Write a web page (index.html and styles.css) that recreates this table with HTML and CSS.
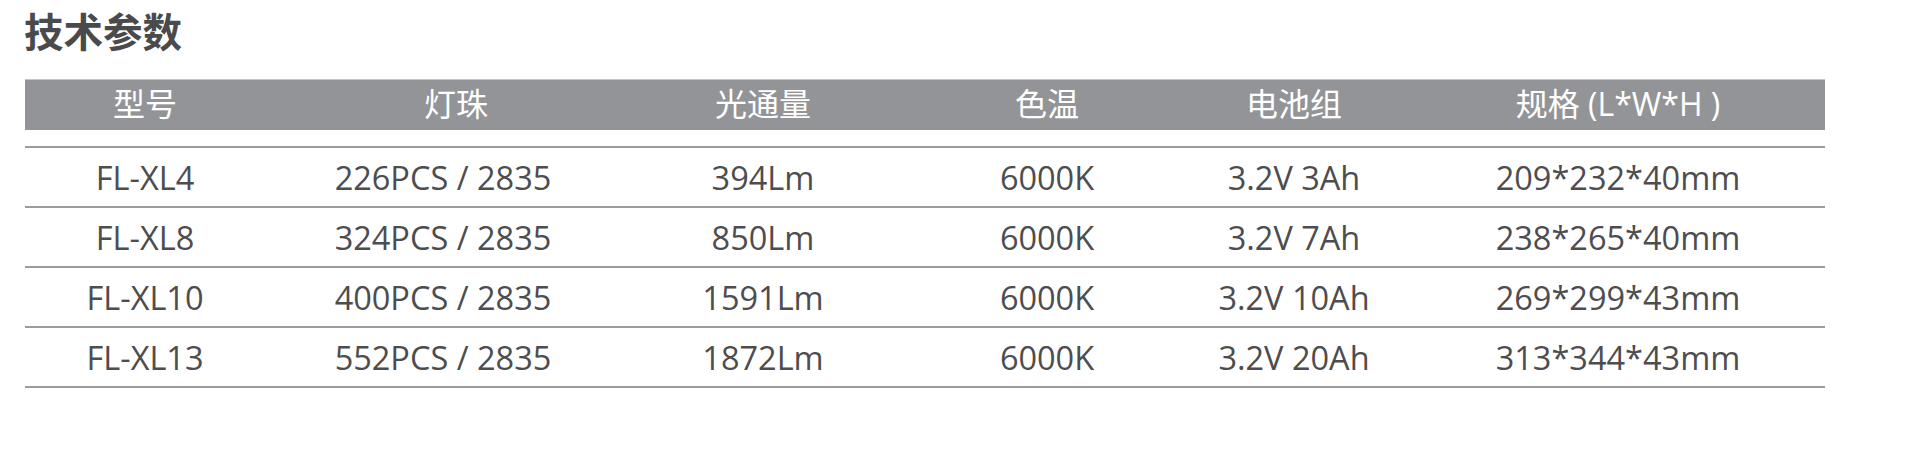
FILE: index.html
```html
<!DOCTYPE html>
<html lang="zh">
<head>
<meta charset="utf-8">
<title>技术参数</title>
<link rel="stylesheet" href="styles.css">
</head>
<body>
<div class="page">
  <h1 class="title">技术参数</h1>
  <div class="table">
    <div class="thead">
      <div class="th">型号</div>
      <div class="th th-led">灯珠</div>
      <div class="th">光通量</div>
      <div class="th">色温</div>
      <div class="th">电池组</div>
      <div class="th th-last">规格 (L*W*H )</div>
    </div>
    <div class="tbody">
      <div class="tr">
        <div class="td">FL-XL4</div>
        <div class="td">226PCS / 2835</div>
        <div class="td">394Lm</div>
        <div class="td">6000K</div>
        <div class="td">3.2V 3Ah</div>
        <div class="td td-last">209*232*40mm</div>
      </div>
      <div class="tr">
        <div class="td">FL-XL8</div>
        <div class="td">324PCS / 2835</div>
        <div class="td">850Lm</div>
        <div class="td">6000K</div>
        <div class="td">3.2V 7Ah</div>
        <div class="td td-last">238*265*40mm</div>
      </div>
      <div class="tr">
        <div class="td">FL-XL10</div>
        <div class="td">400PCS / 2835</div>
        <div class="td">1591Lm</div>
        <div class="td">6000K</div>
        <div class="td">3.2V 10Ah</div>
        <div class="td td-last">269*299*43mm</div>
      </div>
      <div class="tr">
        <div class="td">FL-XL13</div>
        <div class="td">552PCS / 2835</div>
        <div class="td">1872Lm</div>
        <div class="td">6000K</div>
        <div class="td">3.2V 20Ah</div>
        <div class="td td-last">313*344*43mm</div>
      </div>
    </div>
  </div>
</div>
</body>
</html>
```

FILE: styles.css
```css
html, body {
  margin: 0;
  padding: 0;
  background: #ffffff;
}

.page {
  width: 1800px;
  padding: 8px 0 0 25px;
  font-family: "Open Sans", "Noto Sans CJK SC", sans-serif;
}

.title {
  margin: 0 0 0 -1px;
  font-family: "Noto Sans CJK SC", sans-serif;
  font-size: 39.5px;
  line-height: 44px;
  font-weight: 700;
  color: #4a4a4c;
}

.table {
  margin-top: 27px;
}

.thead,
.tr {
  display: grid;
  grid-template-columns: 240px 356px 284px 284px 210px 426px;
}

.thead {
  height: 51px;
  background: #939497;
  border-top: 1px solid #c4c5c7;
  box-sizing: border-box;
  align-items: center;
}

.th {
  text-align: center;
  color: #ffffff;
  font-family: "Open Sans", "Noto Sans CJK SC", sans-serif;
  font-size: 32px;
  line-height: 1;
  padding-bottom: 2px;
}

.th-led {
  padding-left: 26px;
}

.tbody {
  margin-top: 16px;
  border-bottom: 2px solid #9c9c9c;
}

.tr {
  height: 60px;
  border-top: 2px solid #9c9c9c;
  box-sizing: border-box;
  align-items: center;
}

.td {
  text-align: center;
  color: #4d4d4f;
  font-size: 32.5px;
  line-height: 1;
  padding-top: 2px;
}

.th-last,
.td-last {
  padding-left: 12px;
}
```
